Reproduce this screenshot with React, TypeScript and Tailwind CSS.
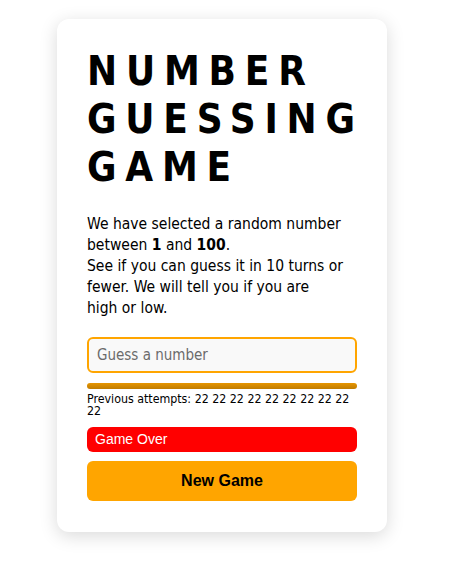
export default function App() {
  const attempts = Array(10).fill(22);
  return (
    <div className="min-h-[573px] w-full bg-white flex justify-center pt-[19px] pr-[9px]">
      <div className="w-[330px] h-[513px] bg-white rounded-xl shadow-[0_4px_18px_rgba(0,0,0,0.15)] px-[30px] pt-[28px] font-['DejaVu_Sans_Condensed','DejaVu_Sans',sans-serif]">
        <h1 className="font-['DejaVu_Sans_Condensed',sans-serif] font-bold text-[40px] leading-[48px] tracking-[0.22em] text-black uppercase">
          Number Guessing Game
        </h1>
        <p className="mt-[23px] text-[15.5px] leading-[21px] text-black">
          We have selected a random number between <b>1</b> and <b>100</b>.
          <br />
          See if you can guess it in 10 turns or fewer. We will tell you if you are
          <br />
          high or low.
        </p>
        <input
          type="text"
          placeholder="Guess a number"
          className="mt-[18px] w-full h-[36px] rounded-md border-2 border-[#ffa500] bg-[#f9f9f9] px-[8px] text-[15px] placeholder:text-[#6b6b6b] outline-none"
        />
        <div className="mt-[10px] h-[6px] w-full rounded-full bg-gradient-to-b from-[#e69500] to-[#c07c00]" />
        <div className="mt-[4px] text-[12.3px] leading-[12px] text-black">
          Previous attempts: {attempts.join(" ")}
        </div>
        <div className="mt-[10px] h-[25px] rounded-md bg-[#ff0000] px-[8px] flex items-center text-white text-[14px] font-['Liberation_Sans',sans-serif]">
          Game Over
        </div>
        <button className="mt-[9px] w-full h-[40px] rounded-md bg-[#ffa500] text-black font-bold text-[16px] font-['Liberation_Sans',sans-serif]">
          New Game
        </button>
      </div>
    </div>
  );
}
